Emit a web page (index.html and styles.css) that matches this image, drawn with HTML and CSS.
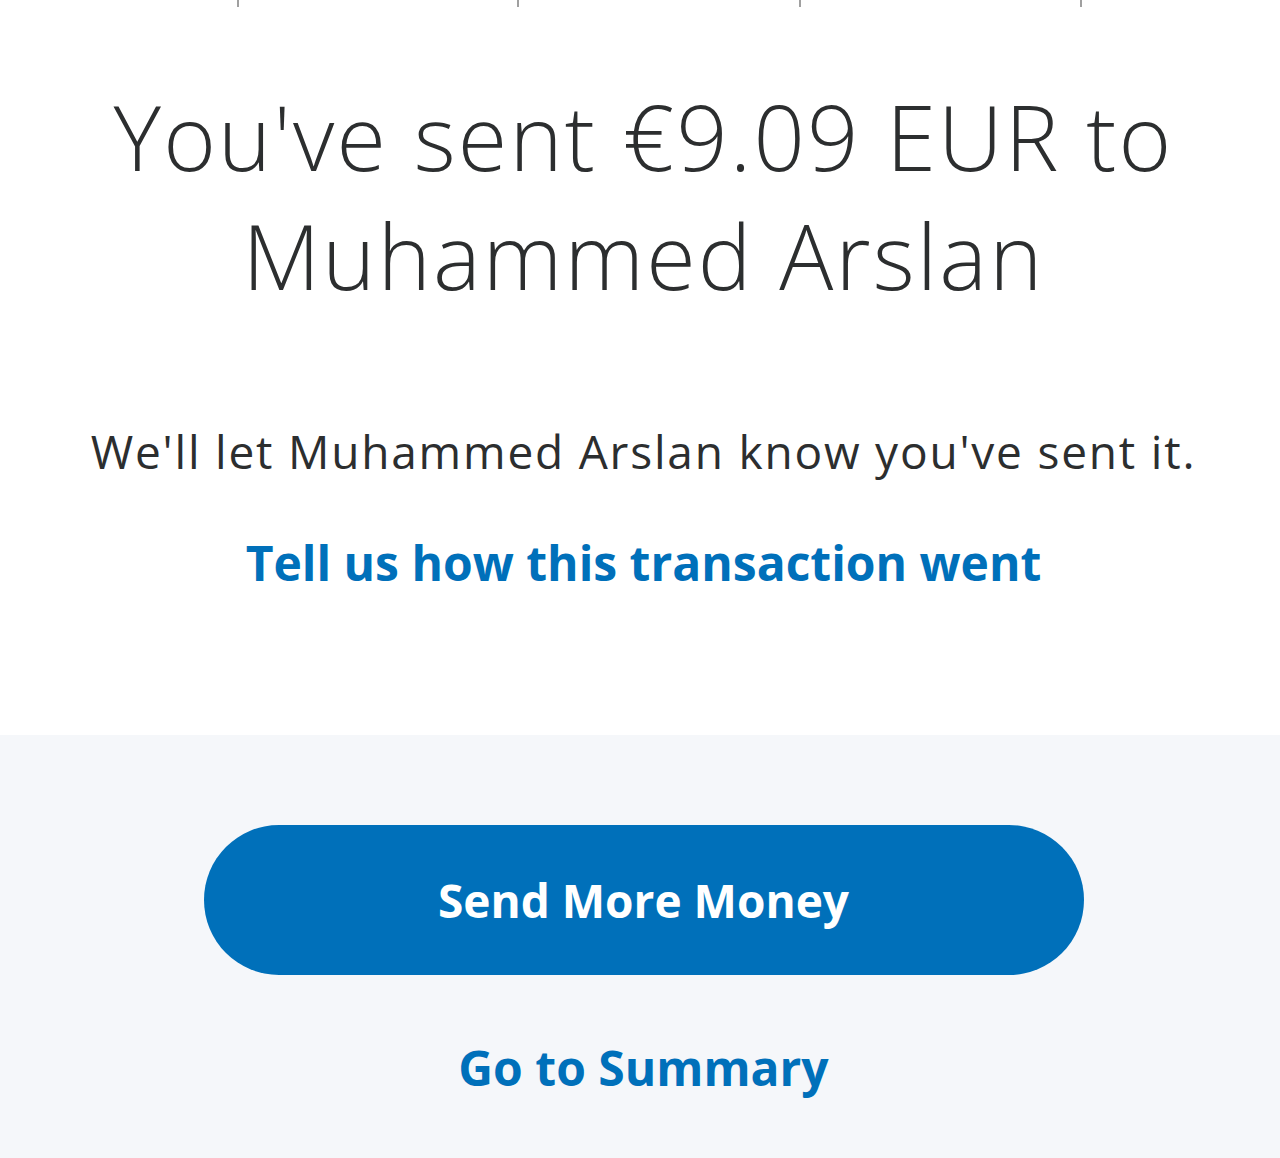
FILE: index.html
```html
<!DOCTYPE html>
<html lang="en">
<head>
<meta charset="utf-8">
<title>Payment sent</title>
<link rel="stylesheet" href="styles.css">
</head>
<body>
<div class="page">
  <section class="top">
    <div class="ticks">
      <span class="tick t1"></span>
      <span class="tick t2"></span>
      <span class="tick t3"></span>
      <span class="tick t4"></span>
    </div>
    <h1 class="title">You've sent €9.09 EUR to<br>Muhammed Arslan</h1>
    <p class="note">We'll let Muhammed Arslan know you've sent it.</p>
    <a class="feedback" href="#">Tell us how this transaction went</a>
  </section>
  <section class="bottom">
    <button class="primary" type="button">Send More Money</button>
    <a class="summary" href="#">Go to Summary</a>
  </section>
</div>
</body>
</html>
```
FILE: styles.css
```css
* { box-sizing: border-box; }
html, body { margin: 0; padding: 0; }
body {
  font-family: "Open Sans", "Liberation Sans", sans-serif;
  background: #f5f7fa;
  color: #2c2e2f;
}
.page {
  width: 1280px;
  height: 1158px;
  display: flex;
  flex-direction: column;
}
.top {
  background: #ffffff;
  height: 735px;
  padding-left: 7px;
  display: flex;
  flex-direction: column;
  align-items: center;
  position: relative;
}
.ticks {
  position: absolute;
  top: 0;
  left: 0;
  right: 0;
  height: 8px;
}
.tick {
  position: absolute;
  top: 0;
  width: 2px;
  height: 7px;
  background: #a0a0a0;
}
.t1 { left: 237px; }
.t2 { left: 517px; }
.t3 { left: 799px; }
.t4 { left: 1080px; }
.title {
  margin: 77px 0 0;
  font-weight: 300;
  font-size: 90px;
  line-height: 119px;
  letter-spacing: 2.2px;
  text-align: center;
  color: #2c2e2f;
}
.note {
  margin: 108px 0 0;
  font-size: 46px;
  line-height: 56px;
  letter-spacing: 1.8px;
  text-align: center;
}
.feedback {
  margin-top: 56px;
  font-size: 48px;
  font-weight: 700;
  line-height: 56px;
  color: #0070ba;
  text-decoration: none;
}
.bottom {
  flex: 1;
  padding-left: 7px;
  display: flex;
  flex-direction: column;
  align-items: center;
  padding-top: 90px;
}
.primary {
  width: 880px;
  height: 150px;
  border: none;
  border-radius: 75px;
  background: #0070ba;
  color: #ffffff;
  font-family: "Open Sans", "Liberation Sans", sans-serif;
  font-weight: 700;
  font-size: 46px;
}
.summary {
  margin-top: 63px;
  font-size: 48px;
  font-weight: 700;
  line-height: 60px;
  color: #0070ba;
  text-decoration: none;
}
```
